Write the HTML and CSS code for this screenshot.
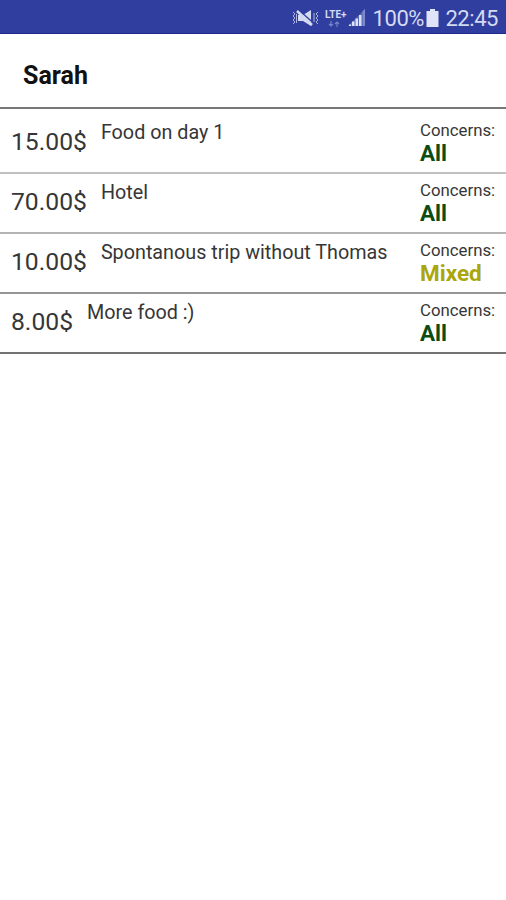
FILE: index.html
```html
<!DOCTYPE html>
<html lang="en">
<head>
<meta charset="utf-8">
<title>Sarah</title>
<link rel="stylesheet" href="styles.css">
</head>
<body>
<header class="status">
  <svg class="mute" width="27" height="18" viewBox="0 0 27 18" fill="#d5daf3">
    <path d="M6 6h5l8-5v16l-8-5H6z"/>
    <path d="M6 .5l16 14" stroke="#303f9f" stroke-width="1.500"/>
    <path d="M5 2l15 14" stroke="#d5daf3" stroke-width="2.600"/>
    <path d="M1 3l2 2-2 2 2 2-2 2 2 2-2 2M4.500 5v9M26 3l-2 2 2 2-2 2 2 2-2 2 2 2M22 4v9" fill="none" stroke="#aeb6df" stroke-width="1"/>
  </svg>
  <div class="lte"><span>LTE+</span>
    <svg width="12" height="6" viewBox="0 0 12 6" fill="none" stroke="#7885cd" stroke-width="1.1"><path d="M3 0v5M1 3l2 2 2-2M9 6V1M7 3l2-2 2 2"/></svg>
  </div>
  <svg class="signal" width="18" height="18" viewBox="0 0 18 18">
    <path d="M0 17L17 0v17z" fill="#5967b8"/>
    <path d="M1 15.500h2V17H1zM4 12.500h2.500V17H4zM7.500 9.500h2.500V17H7.500zM11 6h2.500v11H11z" fill="#dce1f7"/>
    <path d="M14.500 2.500L17 0v17h-2.500z" fill="#7d89cb"/>
  </svg>
  <span class="percent">100%</span>
  <svg class="battery" width="13" height="18" viewBox="0 0 13 18"><path d="M4 0h5v2h3.500v16H.5V2H4z" fill="#e0e4f8"/></svg>
  <span class="clock">22:45</span>
</header>
<h1 class="name">Sarah</h1>
<ul class="list">
  <li class="row first"><span class="amount">15.00$</span><span class="title">Food on day 1</span><div class="concerns"><span class="label">Concerns:</span><strong class="all">All</strong></div></li>
  <li class="row"><span class="amount">70.00$</span><span class="title">Hotel</span><div class="concerns"><span class="label">Concerns:</span><strong class="all">All</strong></div></li>
  <li class="row third"><span class="amount">10.00$</span><span class="title">Spontanous trip without Thomas</span><div class="concerns"><span class="label">Concerns:</span><strong class="mixed">Mixed</strong></div></li>
  <li class="row last"><span class="amount">8.00$</span><span class="title">More food :)</span><div class="concerns"><span class="label">Concerns:</span><strong class="all">All</strong></div></li>
</ul>
</body>
</html>
```
FILE: styles.css
```css
* { box-sizing: border-box; }
body { margin: 0; background: #fff; color: #363636; font-family: Roboto, "Liberation Sans", sans-serif; }
.status { display: flex; align-items: center; height: 34px; padding: 3px 8px 0 292px; background: #303f9f; border-bottom: 1px solid #202c8c; color: #d5daf3; font-size: 22px; line-height: 30px; white-space: nowrap; }
.status svg { flex: none; display: block; }
.lte { width: 24px; margin-left: 6px; font-size: 10px; font-weight: 700; line-height: 10px; }
.lte svg { margin-left: 3px; margin-top: 1px; }
.percent { width: 51px; margin-left: 6px; padding-top: 2px; letter-spacing: -.4px; }
.battery { margin-left: 3px; }
.clock { margin-left: 6px; padding-top: 2px; letter-spacing: -.45px; }
.name { height: 73px; margin: 0; padding: 27px 0 0 23px; font-size: 25px; line-height: 30px; font-weight: 700; color: #111; }
.list { margin: 0; padding: 0; list-style: none; border-top: 2px solid #777; }
.row { display: flex; height: 60px; padding: 0 9px 0 11px; border-bottom: 2px solid #b4b4b4; }
.first { height: 65px; padding-top: 5px; border-color: #c0c0c0; }
.third { border-color: #969696; }
.last { border-color: #737373; }
.amount { margin-top: 13px; font-size: 24.7px; line-height: 30px; }
.title { margin: 7px 0 0 14px; font-size: 19.75px; line-height: 24px; }
.concerns { display: flex; flex-direction: column; width: 77px; margin-left: auto; padding-top: 6px; }
.label { font-size: 16.8px; line-height: 20px; }
.concerns strong { font-size: 22.500px; line-height: 26px; font-weight: 700; }
.all { color: #0b4d10; }
.mixed { color: #aaa60c; }
```
